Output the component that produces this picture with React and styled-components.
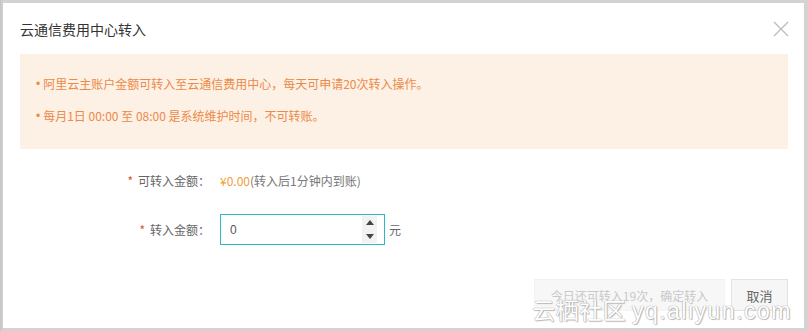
import styled, { createGlobalStyle } from "styled-components";

const GlobalStyle = createGlobalStyle`
  html, body {
    margin: 0;
    padding: 0;
    background: #c9c9c9;
  }
  body {
    font-family: "Noto Sans CJK SC", "Noto Sans", "Liberation Sans", sans-serif;
  }
`;

const Backdrop = styled.div`
  width: 808px;
  height: 331px;
  box-sizing: border-box;
  padding: 3px 4px 3px 3px;
  background: linear-gradient(to right, #c4c4c4 0, #d3d3d3 3px);
`;

const Dialog = styled.div`
  position: relative;
  height: 100%;
  background: #fff;
  box-sizing: border-box;
  padding: 0 16px 0 17px;
  display: flex;
  flex-direction: column;
  overflow: hidden;
`;

const Header = styled.div`
  height: 51px;
  display: flex;
  align-items: center;
  justify-content: space-between;
`;

const Title = styled.h2`
  margin: 0;
  font-size: 14px;
  font-weight: 400;
  color: #333;
`;

const Close = styled.button`
  width: 18px;
  height: 18px;
  margin-right: -2px;
  padding: 0;
  border: none;
  background: transparent;
  display: flex;
  align-items: center;
  justify-content: center;
  cursor: pointer;
`;

const Notice = styled.ul`
  margin: 0;
  list-style: none;
  background: #fdf1e5;
  padding: 22px 16px 25px 16px;
  display: flex;
  flex-direction: column;
  gap: 16px;
`;

const NoticeItem = styled.li`
  font-size: 12px;
  line-height: 16px;
  color: #ec8a49;
  display: flex;

  &::before {
    content: "•";
    margin-right: 3px;
    font-family: "Liberation Sans", sans-serif;
  }
`;

const Form = styled.div`
  margin-top: 16px;
  display: grid;
  grid-template-columns: 190px 1fr;
  column-gap: 10px;
  row-gap: 18px;
  align-items: center;
`;

const Label = styled.label`
  justify-self: end;
  font-size: 12px;
  color: #666;
  line-height: 31px;
  display: flex;
  gap: 5px;

  &::before {
    content: "*";
    color: #d9541f;
  }
`;

const Value = styled.div`
  font-size: 12px;
  color: #777;
  line-height: 31px;
`;

const Amount = styled.span`
  color: #f0a03c;
`;

const Field = styled.div`
  display: flex;
  align-items: center;
  gap: 4px;
`;

const InputBox = styled.div`
  width: 165px;
  height: 31px;
  box-sizing: border-box;
  border: 1px solid #2bb8c8;
  display: flex;
  align-items: center;
  padding: 0 7px 0 9px;
`;

const Input = styled.input`
  flex: 1;
  min-width: 0;
  border: none;
  outline: none;
  font-family: "Liberation Sans", sans-serif;
  font-size: 12px;
  color: #555;
  padding: 0;
  background: transparent;
`;

const Spinner = styled.div`
  width: 15px;
  height: 27px;
  background: #f2f2f2;
  display: flex;
  flex-direction: column;
  align-items: center;
  justify-content: space-around;
`;

const Arrow = styled.span`
  width: 0;
  height: 0;
  border-left: 4px solid transparent;
  border-right: 4px solid transparent;
  ${(p) =>
    p.$up ? "border-bottom: 5px solid #444;" : "border-top: 5px solid #444;"}
`;

const Unit = styled.span`
  font-size: 12px;
  color: #666;
`;

const Footer = styled.div`
  margin-top: auto;
  padding-bottom: 17px;
  display: flex;
  justify-content: flex-end;
  gap: 6px;
`;

const Button = styled.button`
  height: 32px;
  width: ${(p) => p.$w}px;
  box-sizing: border-box;
  border: 1px solid ${(p) => (p.$disabled ? "#f2f2f2" : "#e3e3e3")};
  background: ${(p) => (p.$disabled ? "#f7f7f7" : "#f6f6f6")};
  color: ${(p) => (p.$disabled ? "#c9c9c9" : "#666")};
  font-family: inherit;
  font-size: ${(p) => (p.$disabled ? 12 : 13)}px;
  padding: 0;
`;

const Watermark = styled.div`
  position: absolute;
  right: 12px;
  bottom: 4px;
  font-size: 23px;
  line-height: 26px;
  color: #fff;
  white-space: nowrap;
  letter-spacing: 0.5px;
  text-shadow: 0 0 1px #a0a0a0, 0 0 1px #a0a0a0, 1px 1px 1px #c0c0c0;
  pointer-events: none;

  span {
    font-family: "Liberation Sans", sans-serif;
    letter-spacing: 1.5px;
  }
`;

export default function App() {
  return (
    <>
      <GlobalStyle />
      <Backdrop>
        <Dialog>
          <Header>
            <Title>云通信费用中心转入</Title>
            <Close aria-label="close">
              <svg width="16" height="16" viewBox="0 0 16 16">
                <path d="M1 1L15 15M15 1L1 15" stroke="#bdbdbd" strokeWidth="1.4" fill="none" />
              </svg>
            </Close>
          </Header>
          <Notice>
            <NoticeItem>阿里云主账户金额可转入至云通信费用中心，每天可申请20次转入操作。</NoticeItem>
            <NoticeItem>每月1日 00:00 至 08:00 是系统维护时间，不可转账。</NoticeItem>
          </Notice>
          <Form>
            <Label>可转入金额：</Label>
            <Value>
              <Amount>¥0.00</Amount>(转入后1分钟内到账)
            </Value>
            <Label>转入金额：</Label>
            <Field>
              <InputBox>
                <Input defaultValue="0" />
                <Spinner>
                  <Arrow $up />
                  <Arrow />
                </Spinner>
              </InputBox>
              <Unit>元</Unit>
            </Field>
          </Form>
          <Footer>
            <Button $w={191} $disabled>今日还可转入19次，确定转入</Button>
            <Button $w={57}>取消</Button>
          </Footer>
          <Watermark>
            云栖社区 <span>yq.aliyun.com</span>
          </Watermark>
        </Dialog>
      </Backdrop>
    </>
  );
}
